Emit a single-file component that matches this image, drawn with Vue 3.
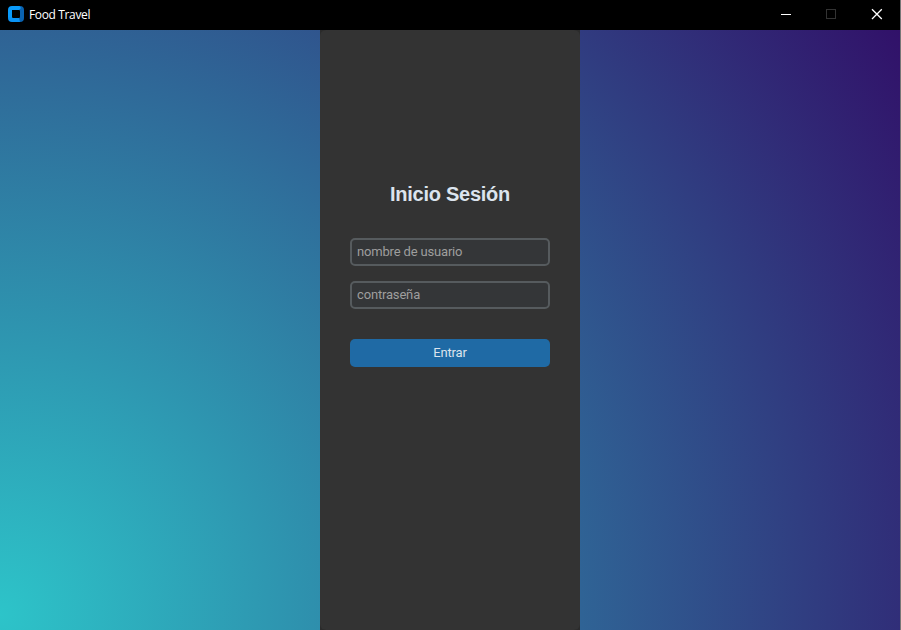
<script setup>
import { ref } from 'vue'

const username = ref('')
const password = ref('')
</script>

<template>
  <div class="window">
    <header class="titlebar">
      <svg class="logo" width="16" height="16" viewBox="0 0 16 16">
        <path d="M4 0h8v4H4v8H0V4a4 4 0 0 1 4-4z" fill="#0a9bfb" />
        <path d="M0 11h4l1 1h7v4H4a4 4 0 0 1-4-4z" fill="#0a93f5" />
        <path d="M11 0h1a4 4 0 0 1 4 4v8a4 4 0 0 1-4 4l-1-4 1-1V5l-1-1z" fill="#0a62b0" />
        <path d="M4 0h7.5l1.5 2-2 2H4z" fill="#0a9bfb" />
        <rect x="4" y="4" width="8" height="8" rx="1.8" fill="#000" />
      </svg>
      <span class="title">Food Travel</span>
      <div class="controls">
        <svg width="46" height="30" viewBox="0 0 46 30" shape-rendering="crispEdges">
          <rect x="19" y="14" width="10" height="1" fill="#fff" />
        </svg>
        <svg width="45" height="30" viewBox="0 0 45 30" shape-rendering="crispEdges">
          <rect x="18.5" y="9.5" width="9" height="9" fill="none" stroke="#333" />
        </svg>
        <svg width="47" height="30" viewBox="0 0 47 30">
          <path d="M19 9.2l9.8 9.8M28.8 9.2L19 19" fill="none" stroke="#fff" stroke-width="1.3" />
        </svg>
      </div>
    </header>
    <main class="backdrop">
      <form class="panel" @submit.prevent>
        <h1>Inicio Sesión</h1>
        <input v-model="username" type="text" placeholder="nombre de usuario" />
        <input v-model="password" type="password" placeholder="contraseña" />
        <button type="submit">Entrar</button>
      </form>
    </main>
  </div>
</template>

<style>
body {
  margin: 0;
  overflow: hidden;
}
</style>

<style scoped>
.window {
  box-sizing: border-box;
  width: 901px;
  height: 630px;
  border-right: 1px solid #777;
  display: flex;
  flex-direction: column;
  background: #000;
}
.titlebar {
  height: 30px;
  display: flex;
  align-items: center;
  padding-left: 8px;
  box-sizing: border-box;
  background: #000;
}
.logo {
  display: block;
  margin-bottom: 2px;
}
.title {
  margin-left: 5px;
  color: #fff;
  font: 12px/16px "Open Sans", "Noto Sans", sans-serif;
  letter-spacing: -0.36px;
}
.controls {
  display: flex;
  margin-left: auto;
}
.controls svg {
  display: block;
}
.backdrop {
  flex: 1;
  display: flex;
  justify-content: center;
  background: radial-gradient(circle at 0 585px, #2dc4c9 0, #311169 1074px);
}
.panel {
  box-sizing: border-box;
  width: 260px;
  height: 600px;
  padding: 150px 30px 0;
  display: flex;
  flex-direction: column;
  border-radius: 6px;
  background: #333;
  box-shadow: 0 0 0 6px #2b2b2b;
  clip-path: inset(0);
}
h1 {
  margin: 0 0 30px;
  height: 28px;
  color: #dce4ee;
  font: bold 20px/28px "Liberation Sans", Arial, sans-serif;
  letter-spacing: -0.25px;
  text-align: center;
}
input {
  box-sizing: border-box;
  width: 200px;
  height: 28px;
  margin: 0 0 15px;
  padding: 0 5px 2px;
  border: 2px solid #565b5e;
  border-radius: 5px;
  background: #343638;
  color: #dce4ee;
  font: 13px/22px Roboto, sans-serif;
  letter-spacing: -0.17px;
  outline: none;
}
input::placeholder {
  color: #9e9e9e;
  opacity: 1;
}
button {
  width: 200px;
  height: 28px;
  margin: 15px 0 0;
  padding: 0;
  border: 0;
  border-radius: 5px;
  background: #1f6aa5;
  color: #dce4ee;
  font: 13px/28px Roboto, sans-serif;
  letter-spacing: -0.17px;
}
</style>
